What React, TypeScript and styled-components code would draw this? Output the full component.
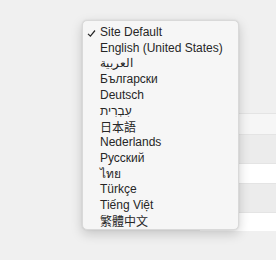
import styled, { createGlobalStyle } from 'styled-components';

const GlobalStyle = createGlobalStyle`
    html, body {
        margin: 0;
        padding: 0;
        background: #f0f0f0;
        font-family: "Liberation Sans", Arial, "Noto Sans CJK TC", sans-serif;
    }
`;

const Page = styled.div`
    position: relative;
    width: 276px;
    height: 260px;
    overflow: hidden;
    background: #f0f0f0;
`;

const Table = styled.div`
    display: flex;
    flex-direction: column;
    padding-top: 113px;
    padding-left: 200px;
`;

const Row = styled.div<{ tone: string; h: number }>`
    height: ${(p) => p.h}px;
    background: ${(p) => p.tone};
    border-top: 1px solid #e4e4e4;
`;

const Menu = styled.ul`
    position: absolute;
    left: 82px;
    top: 20px;
    width: 157px;
    height: 210px;
    box-sizing: border-box;
    margin: 0;
    padding: 3px 0 0;
    list-style: none;
    background: #f6f6f6;
    border-radius: 5px;
    border: 1px solid #d9d9d9;
    box-shadow: 0 4px 12px rgba(0, 0, 0, 0.18), 0 0 2px rgba(0, 0, 0, 0.1);
`;

const Item = styled.li`
    display: flex;
    align-items: center;
    height: 15.75px;
    padding-left: 17px;
    font-size: 12px;
    color: #262626;
    white-space: nowrap;
    position: relative;
`;

const Check = styled.span`
    position: absolute;
    left: 4px;
    top: 3px;
    width: 9px;
    height: 9px;
`;

const languages = [
    'Site Default',
    'English (United States)',
    'العربية',
    'Български',
    'Deutsch',
    'עִבְרִית',
    '日本語',
    'Nederlands',
    'Русский',
    'ไทย',
    'Türkçe',
    'Tiếng Việt',
    '繁體中文',
];

const rows = [
    { tone: '#f6f6f6', h: 20 },
    { tone: '#ececec', h: 28 },
    { tone: '#ffffff', h: 19 },
    { tone: '#ececec', h: 28 },
    { tone: '#ffffff', h: 18 },
];

function App() {
    return (
        <Page>
            <GlobalStyle />
            <Table>
                {rows.map((r, i) => (
                    <Row key={i} tone={r.tone} h={r.h} />
                ))}
            </Table>
            <Menu>
                {languages.map((name, i) => (
                    <Item key={i}>
                        {i === 0 && (
                            <Check>
                                <svg width="9" height="9" viewBox="0 0 9 9">
                                    <path d="M1 4.8 L3.4 7.2 L8 1.5" fill="none" stroke="#262626" strokeWidth="1.2" />
                                </svg>
                            </Check>
                        )}
                        <span dir="auto">{name}</span>
                    </Item>
                ))}
            </Menu>
        </Page>
    );
}

export default App;
